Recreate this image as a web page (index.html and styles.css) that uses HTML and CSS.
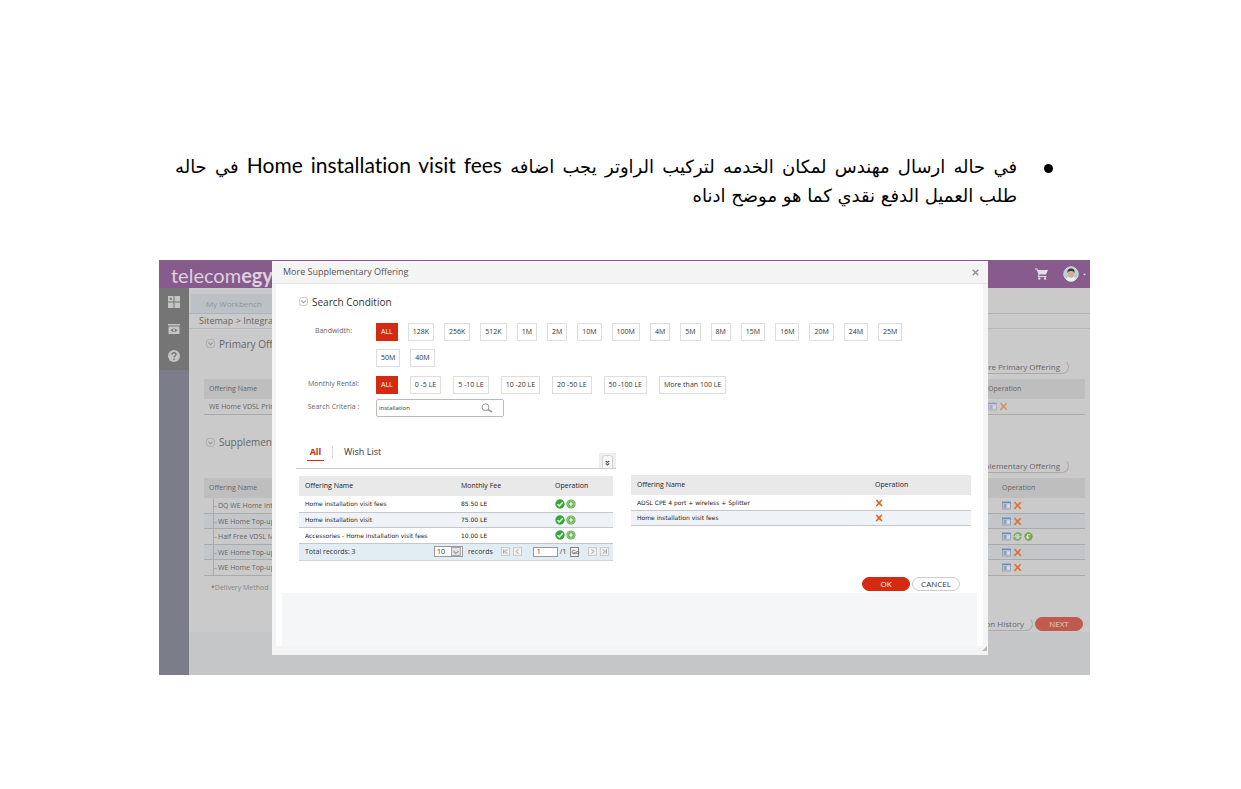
FILE: index.html
```html
<!DOCTYPE html>
<html lang="en">
<head>
<meta charset="utf-8">
<title>More Supplementary Offering</title>
<link rel="stylesheet" href="styles.css">
</head>
<body>
<svg class="defs" aria-hidden="true">
  <symbol id="chev" viewBox="0 0 10 10"><rect x=".5" y=".5" width="9" height="9" rx="3" fill="none" stroke="currentColor" stroke-width=".6"/><path d="M2.500 4 5 6.300 7.500 4" fill="none" stroke="currentColor" stroke-width="1.200"/></symbol>
  <symbol id="cross" viewBox="0 0 8 8"><path d="M.8 1.200 2 .5 4 2.800 6.400.6 7.400 1.300 5.200 4 7.500 6.500 6.500 7.400 4 5.200 1.800 7.500.6 6.700 2.900 4z" fill="#e0601c"/></symbol>
  <symbol id="check" viewBox="0 0 10 10"><circle cx="5" cy="5" r="4.700" fill="#2faa32"/><path d="M2.500 5.200 4.300 7 7.700 3.300" fill="none" stroke="#fff" stroke-width="1.500"/></symbol>
  <symbol id="plus" viewBox="0 0 10 10"><circle cx="5" cy="5" r="4.600" fill="#5aac48"/><circle cx="5" cy="5" r="3.500" fill="none" stroke="#c4e2b8" stroke-width=".6"/><path d="M5 2.800v4.400M2.800 5h4.400" stroke="#fff" stroke-width="1.200"/></symbol>
  <symbol id="form" viewBox="0 0 9 8"><rect x=".5" y=".5" width="8" height="7" fill="#c5d2e4" stroke="#7f8fb0" stroke-width=".8"/><path d="M0 1h9" stroke="#5b78b8" stroke-width="1.400"/><path d="M1.500 3.500h3M1.500 5.500h3" stroke="#555f78"/><path d="M5.500 4.500h2" stroke="#fff"/></symbol>
  <symbol id="sync" viewBox="0 0 10 10"><path d="M1.200 4.500A4 4 0 0 1 8 2.300M8.800 5.500A4 4 0 0 1 2 7.700" fill="none" stroke="#4aa83c" stroke-width="1.500"/><path d="M9.500.8v3.400h-3.400zM.5 9.200v-3.400h3.400z" fill="#4aa83c"/></symbol>
  <symbol id="back" viewBox="0 0 10 10"><circle cx="5" cy="5" r="4.600" fill="#5f9f2c"/><path d="M7 3H4v4M2.500 5 4 7.200 6 5.500" fill="none" stroke="#e8f3dc" stroke-width="1.200"/></symbol>
</svg>

<main class="document">
  <ul class="note" dir="rtl" lang="ar">
    <li><span class="line full">في حاله ارسال مهندس لمكان الخدمه لتركيب الراوتر يجب اضافه <span class="latin" lang="en" dir="ltr">Home installation visit fees</span> في حاله</span> <span class="line">طلب العميل الدفع نقدي كما هو موضح ادناه</span></li>
  </ul>

  <div class="app">
    <header class="topbar">
      <div class="brand">telecom<b>egypt</b></div>
      <div class="account">
        <svg class="cart" viewBox="0 0 13 12"><path d="M0 .5h2.200l.8 1.500H13L11 6.500H4.800L4 8h7.500v1H2.800L3.500 6.500 1.600 1.500H0z" fill="#e4dce6"/><circle cx="4.300" cy="10.500" r="1.200" fill="#e4dce6"/><circle cx="10" cy="10.500" r="1.200" fill="#e4dce6"/></svg>
        <svg class="avatar" viewBox="0 0 16 16"><circle cx="8" cy="8" r="7.200" fill="#b9d0d6" stroke="#d8dfe2"/><path d="M3 13.500c1-2.500 3-3 5-3s4 .5 5 3A7 7 0 0 1 3 13.500z" fill="#eef0f0"/><ellipse cx="8" cy="7.800" rx="3.200" ry="3.900" fill="#d5ad98"/><path d="M4.500 7C4 3.500 6 2.600 8 2.600s4 .9 3.500 4.400C10.500 5 9 5 8 5s-2.500 0-3.500 2z" fill="#3c3a3c"/></svg>
        <svg class="caret" viewBox="0 0 4 3"><path d="M0 .5h4L2 2.800z" fill="#e4dce6"/></svg>
      </div>
    </header>
    <nav class="rail">
      <div class="rail-top">
        <a href="#" aria-label="Dashboard"><svg viewBox="0 0 12 12"><path d="M0 0h5.500v5.500H0zM6.500 0H12v5.500H6.500zM0 6.500h5.500V12H0zM6.500 6.500H12V12H6.500z" fill="#c4c4c4"/><path d="M1.800 2.800h2" stroke="#757575" stroke-width="2"/></svg></a>
        <a href="#" aria-label="Preview"><svg viewBox="0 0 12 12"><path d="M0 1h12v1.500H0zM.5 3.500h11V11H.5z" fill="#c4c4c4"/><path d="M2.500 7.200Q6 3.800 9.500 7.200 6 10.500 2.500 7.200z" fill="#757575"/><circle cx="6" cy="7.200" r="1.100" fill="#c4c4c4"/></svg></a>
        <a href="#" aria-label="Help"><svg viewBox="0 0 12 12"><circle cx="6" cy="6" r="6" fill="#c4c4c4"/><path d="M4 4.800C4 2 8 2.200 8 4.600 8 6 6 6 6 7.600M6 8.600v1.300" fill="none" stroke="#757575" stroke-width="1.300"/></svg></a>
      </div>
    </nav>
    <section class="workspace">
      <div class="tabs"><a class="tab" href="#">My Workbench</a></div>
      <div class="crumbs">Sitemap &gt; Integrated</div>
      <div class="content">
        <h2 class="heading"><svg><use href="#chev"/></svg>Primary Offering</h2>
        <div class="action"><button class="pill">More Primary Offering</button></div>
        <table class="list primary">
          <thead><tr><th>Offering Name</th><th class="op">Operation</th></tr></thead>
          <tbody><tr><td>WE Home VDSL Primary</td><td class="op faded"><svg><use href="#form"/></svg><svg><use href="#cross"/></svg></td></tr></tbody>
        </table>
        <h2 class="heading second"><svg><use href="#chev"/></svg>Supplementary</h2>
        <div class="action"><button class="pill">More Supplementary Offering</button></div>
        <table class="list tree">
          <thead><tr><th>Offering Name</th><th class="op">Operation</th></tr></thead>
          <tbody>
            <tr><td>DQ WE Home Internet</td><td class="op"><svg><use href="#form"/></svg><svg><use href="#cross"/></svg></td></tr>
            <tr><td>WE Home Top-up</td><td class="op"><svg><use href="#form"/></svg><svg><use href="#cross"/></svg></td></tr>
            <tr><td>Half Free VDSL Modem</td><td class="op"><svg><use href="#form"/></svg><svg><use href="#sync"/></svg><svg><use href="#back"/></svg></td></tr>
            <tr><td>WE Home Top-up</td><td class="op"><svg><use href="#form"/></svg><svg><use href="#cross"/></svg></td></tr>
            <tr><td>WE Home Top-up</td><td class="op"><svg><use href="#form"/></svg><svg><use href="#cross"/></svg></td></tr>
          </tbody>
        </table>
        <p class="delivery"><span>*</span>Delivery Method</p>
        <div class="footer-actions"><button class="pill">Interaction History</button><button class="pill red">NEXT</button></div>
      </div>
    </section>

    <div class="dialog" role="dialog" aria-labelledby="dialog-title">
      <div class="dialog-head"><h1 id="dialog-title">More Supplementary Offering</h1>
        <button class="close" aria-label="Close"><svg viewBox="0 0 7 7"><path d="M.7.7l5.600 5.600M6.300.7.7 6.300" stroke="#8b8b8b" stroke-width="1.300"/></svg></button></div>
      <div class="dialog-body">
        <h2 class="heading"><svg><use href="#chev"/></svg>Search Condition</h2>
        <div class="filter">
          <span class="label">Bandwidth:</span>
          <div class="chips">
            <button class="chip on">ALL</button><button class="chip">128K</button><button class="chip">256K</button><button class="chip">512K</button><button class="chip">1M</button><button class="chip">2M</button><button class="chip">10M</button><button class="chip">100M</button><button class="chip">4M</button><button class="chip">5M</button><button class="chip">8M</button><button class="chip">15M</button><button class="chip">16M</button><button class="chip">20M</button><button class="chip">24M</button><button class="chip">25M</button><button class="chip">50M</button><button class="chip">40M</button>
          </div>
        </div>
        <div class="filter">
          <span class="label">Monthly Rental:</span>
          <div class="chips wide">
            <button class="chip on">ALL</button><button class="chip">0 -5 LE</button><button class="chip">5 -10 LE</button><button class="chip">10 -20 LE</button><button class="chip">20 -50 LE</button><button class="chip">50 -100 LE</button><button class="chip">More than 100 LE</button>
          </div>
        </div>
        <div class="filter criteria">
          <label class="label" for="criteria">Search Criteria :</label>
          <div class="search"><input id="criteria" type="text" value="installation"><svg viewBox="0 0 12 10"><circle cx="4.500" cy="4.200" r="3.400" fill="none" stroke="#999" stroke-width="1"/><path d="M7 6.500l4 2.500" stroke="#999" stroke-width="1.600"/></svg></div>
        </div>

        <div class="panels">
          <div class="left">
            <div class="subtabs"><a class="active" href="#">All</a><a class="other" href="#">Wish List</a>
              <button class="toggle" aria-label="Expand"><svg viewBox="0 0 11 13"><path d="M.5 13V3q0-2.500 2.500-2.500h5q2.500 0 2.500 2.500v10" fill="#f8f8f8" stroke="#ccc" stroke-width=".8"/><path d="M3.800 6l1.700 1.500L7.200 6M3.800 8.500l1.700 1.500L7.200 8.500" fill="none" stroke="#555" stroke-width="1.100"/></svg></button></div>
            <div class="results">
            <table class="grid">
              <colgroup><col class="c-name"><col class="c-fee"><col></colgroup>
              <thead><tr><th>Offering Name</th><th>Monthly Fee</th><th>Operation</th></tr></thead>
              <tbody>
                <tr><td>Home installation visit fees</td><td>85.50 LE</td><td><svg><use href="#check"/></svg><svg><use href="#plus"/></svg></td></tr>
                <tr><td>Home installation visit</td><td>75.00 LE</td><td><svg><use href="#check"/></svg><svg><use href="#plus"/></svg></td></tr>
                <tr><td>Accessories - Home installation visit fees</td><td>10.00 LE</td><td><svg><use href="#check"/></svg><svg><use href="#plus"/></svg></td></tr>
              </tbody>
            </table>
            <div class="pager">
              <span class="total">Total records: 3</span>
              <span class="size"><select id="size" aria-label="Records per page"><option>10</option></select><svg viewBox="0 0 12 11"><rect x=".5" y=".5" width="11" height="10" fill="#e2e2e2" stroke="#999"/><path d="M3 5 6 8 9 5" fill="none" stroke="#555"/></svg></span>
              <label for="size">records</label>
              <button class="step first" aria-label="First"><svg viewBox="0 0 8 8"><path d="M2 1.500v5M6 1.500 3.500 4 6 6.500"/></svg></button>
              <button class="step" aria-label="Previous"><svg viewBox="0 0 8 8"><path d="M5 1.500 2.500 4 5 6.500"/></svg></button>
              <input class="page" type="text" value="1" aria-label="Page"><span>/1</span>
              <button class="go">Go</button>
              <button class="step next" aria-label="Next"><svg viewBox="0 0 8 8"><path d="M3 1.500 5.500 4 3 6.500"/></svg></button>
              <button class="step last" aria-label="Last"><svg viewBox="0 0 8 8"><path d="M2 1.500 4.500 4 2 6.500M6 1.500v5"/></svg></button>
            </div>
            </div>
          </div>
          <div class="right">
            <table class="grid chosen">
              <colgroup><col><col class="c-op"></colgroup>
              <thead><tr><th>Offering Name</th><th>Operation</th></tr></thead>
              <tbody>
                <tr><td>ADSL CPE 4 port + wireless + Splitter</td><td><svg><use href="#cross"/></svg></td></tr>
                <tr><td>Home installation visit fees</td><td><svg><use href="#cross"/></svg></td></tr>
              </tbody>
            </table>
          </div>
        </div>
        <div class="dialog-actions"><button class="pill red">OK</button><button class="pill">CANCEL</button></div>
        <div class="blank"></div>
      </div>
      <svg class="grip" viewBox="0 0 6 6"><path d="M6 0v6H0z" fill="#bbb"/></svg>
    </div>
  </div>
</main>
</body>
</html>
```
FILE: styles.css
```css
* { box-sizing: border-box; }
body { margin: 0; background: #fff; color: #333; font: 7px/10px "Open Sans", "Noto Sans", sans-serif; }
button, input, select { font: inherit; color: inherit; margin: 0; }
button { padding: 0; border: 0; background: none; white-space: nowrap; }
a { color: inherit; text-decoration: none; }
h1, h2, p { margin: 0; font-weight: 400; }
table { width: 100%; border-collapse: collapse; table-layout: fixed; }
th { font-weight: 400; text-align: left; }
.defs { position: absolute; width: 0; height: 0; }

.document { padding: 152px 151px 0 159px; }
.note { margin: 0; padding: 0 73px 0 16px; height: 108px; list-style: none; color: #000; font: 18px/29px "DejaVu Sans", sans-serif; }
.note li { display: block; position: relative; }
.note li::before { content: ""; position: absolute; right: -36px; top: 12px; width: 9px; height: 9px; border-radius: 50%; background: #000; }
.line { display: block; }
.full { text-align-last: justify; }
.latin { font-family: Lato, sans-serif; font-size: 21px; line-height: 20px; font-variant-ligatures: none; }

.app { position: relative; display: grid; grid-template-columns: 30px 1fr; background: #c5c6c8; }
.topbar { grid-column: 1 / 3; display: flex; justify-content: space-between; align-items: center; height: 28px; padding: 0 4px 0 12px; background: #875c8c; }
.brand { color: #ddd0df; font: 20px/26px Lato, sans-serif; padding-top: 2px; }
.account { display: flex; align-items: center; }
.cart { width: 13px; height: 12px; margin-right: 15px; }
.avatar { width: 16px; height: 16px; margin-right: 4px; }
.caret { width: 3px; height: 3px; }
.rail { background: #7b7e8a; }
.rail-top { display: flex; flex-direction: column; align-items: center; gap: 15px; height: 82px; padding-top: 8px; background: #757575; }
.rail a, .rail svg { display: block; width: 12px; height: 12px; }

.workspace { margin-bottom: 43px; background: #cacaca; color: #666; }
.tabs { display: flex; height: 26px; padding: 6px 0 0 2px; border-bottom: 1px solid #aeb4bd; }
.tab { width: 100px; padding-left: 15px; background: #bcc1c6; color: #8f9499; font-size: 8px; line-height: 20px; }
.crumbs { height: 15px; padding-left: 10px; border-bottom: 1px solid #b5b8bc; font-size: 9px; line-height: 13px; }
.content { padding: 8px 5px 0 15px; }
.heading { display: flex; align-items: center; gap: 4px; height: 13px; font-size: 10px; }
.heading svg { width: 9px; height: 9px; color: #999; }
.content .heading { padding-left: 2px; }
.content .second { margin-top: 21px; }
.action { display: flex; justify-content: flex-end; padding: 10px 16px 5px 0; }
.pill { height: 14px; padding: 0 8px; border: 1px solid #aaa; border-top-color: transparent; border-radius: 7px; line-height: 12px; font-size: 8px; }
.list th { height: 20px; padding: 0 5px; background: #bebebe; }
.list td { height: 16px; padding: 0 5px; border-bottom: 1px solid #aaa; white-space: nowrap; overflow: hidden; }
.primary td, .list tr:nth-child(even) td { height: 15px; }
.list td, .grid td { line-height: 9px; }
.list .op { width: 102px; }
.list svg { display: inline-block; width: 9px; height: 9px; margin-right: 2px; vertical-align: middle; opacity: .8; }
.list .faded svg { opacity: .5; }
.tree .op { width: 88px; }
.tree td:first-child { padding-left: 14px; background: linear-gradient(#aaa, #aaa) 9px 0 / 1px 100% no-repeat, linear-gradient(#aaa, #aaa) 9px 8px / 4px 1px no-repeat; }
.tree tr:nth-child(even) { background: #c3c7ca; }
.delivery { padding: 7px 7px 0; color: #888; }
.delivery span { color: #c05040; }
.footer-actions { display: flex; justify-content: flex-end; gap: 2px; padding: 24px 2px 1px 0; }
.footer-actions .red { width: 48px; background: #bf5a4d; border-color: #bf5a4d; color: #e4d0cc; }

.dialog { position: absolute; top: 1px; right: 102px; bottom: 20px; left: 113px; display: flex; flex-direction: column; background: #f4f4f4; color: #333; }
.dialog-head { display: flex; justify-content: space-between; align-items: center; height: 23px; padding: 0 9px 0 11px; border-bottom: 1px solid #e4e4e4; }
.dialog-head h1 { font-size: 9px; line-height: 12px; color: #555; }
.close, .close svg { display: block; width: 7px; height: 7px; }
.dialog-body { flex: 1; display: flex; flex-direction: column; margin: 0 5px 9px 4px; padding: 11px 6px 0; background: #fff; }
.dialog-body .heading { padding-left: 17px; }
.filter { display: grid; grid-template-columns: 94px 1fr; padding: 15px 60px 0 0; }
.filter + .filter { padding-top: 9px; }
.filter .label { padding: 3px 0 0 9px; text-align: center; color: #666; }
.chips { display: flex; flex-wrap: wrap; gap: 8px 10px; }
.chips.wide { column-gap: 12px; }
.chip { height: 18px; padding: 0 4px; border: 1px solid #ddd; color: #333; }
.chip.on { background: #d42a12; border-color: #d42a12; color: #fff; }
.filter.criteria { padding-top: 5px; }
.search { display: flex; align-items: center; width: 128px; height: 18px; padding: 0 10px 0 2px; border: 1px solid #bbb; border-radius: 2px; }
.search input { flex: 1; min-width: 0; padding: 0; border: 0; outline: 0; background: none; font-size: 6px; }
.search svg { width: 12px; height: 10px; }

.panels { display: grid; grid-template-columns: 320px 1fr; gap: 15px; padding: 29px 6px 0 14px; }
.subtabs { display: flex; height: 23px; padding-left: 11px; border-bottom: 1px solid #ccc; font-size: 9px; line-height: 12px; }
.subtabs .active { width: 17px; height: 15px; margin-right: 8px; border-bottom: 1px solid #d42a12; color: #d42a12; font-weight: 700; text-align: center; }
.subtabs .other { height: 12px; padding-left: 11px; border-left: 1px solid #ddd; }
.toggle { display: grid; place-items: end center; align-self: flex-end; width: 17px; height: 15px; margin-left: auto; background: #eee; }
.toggle svg { width: 11px; height: 13px; }
.results { margin: 7px 3px 0; }
.grid { color: #222; font-size: 6px; }
.grid th { height: 20px; padding: 0 6px; background: #e9e9e9; font-size: 7px; }
.grid td { height: 16px; padding: 0 6px; border-bottom: 1px solid #c4c8cc; white-space: nowrap; font-family: "DejaVu Sans", sans-serif; }
.grid tr:nth-child(even) td { height: 15px; background: #eff3f7; }
.c-name { width: 156px; }
.c-fee { width: 94px; }
.c-op { width: 102px; }
.grid svg { width: 10px; height: 10px; margin-right: 1px; vertical-align: middle; }
.grid.chosen td { height: 15px; }
.grid.chosen svg { width: 8px; height: 8px; }
.right { padding-top: 29px; }
.pager { display: flex; align-items: center; height: 17px; padding: 0 5px 0 6px; background: #e2edf3; border-bottom: 1px solid #ccd5da; }
.pager > * { flex: none; }
.total { width: 129px; }
.size { display: flex; width: 29px; height: 11px; margin-right: 5px; border: 1px solid #999; background: #fff; }
.size select { flex: 1; min-width: 0; appearance: none; border: 0; padding: 0 2px; background: none; line-height: 9px; }
.size svg { width: 12px; height: 9px; }
.step { width: 9px; height: 9px; margin-right: 3px; border: 1px solid #ccc; background: #f0f0f0; }
.step svg { display: block; width: 7px; height: 7px; fill: none; stroke: #888; }
.first { margin-left: 8px; }
.last { margin-right: 0; }
.page { width: 25px; height: 10px; margin: 0 2px 0 8px; padding: 0 3px; border: 1px solid #999; background: #fff; }
.go { width: 9px; height: 10px; margin-left: 4px; border: 1px solid #888; background: #eee; font-size: 6px; line-height: 8px; }
.next { margin-left: 9px; }
.dialog-actions { display: flex; justify-content: flex-end; gap: 2px; padding: 16px 17px 2px 0; }
.dialog-actions .pill { width: 48px; padding: 0; border-color: #ccc; }
.dialog-actions .red { background: #d42a12; border-color: #d42a12; color: #fff; }
.blank { flex: 1; background: #f5f6f8; }
.grip { position: absolute; right: 1px; bottom: 4px; width: 5px; height: 5px; }
```
